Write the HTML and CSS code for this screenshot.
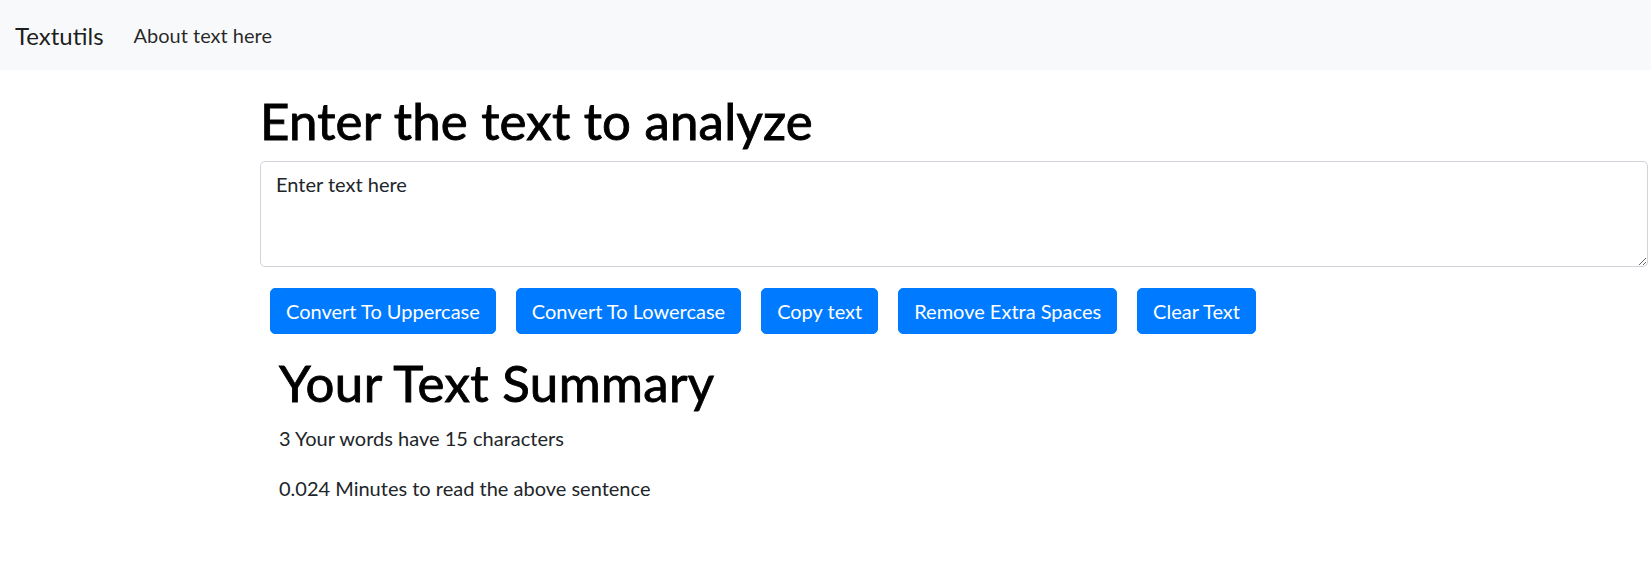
FILE: index.html
```html
<!DOCTYPE html>
<html lang="en">
<head>
<meta charset="utf-8">
<title>Textutils</title>
<link rel="stylesheet" href="styles.css">
</head>
<body>
<nav class="navbar">
  <a class="brand" href="#">Textutils</a>
  <a class="nav-link" href="#">About text here</a>
</nav>
<main class="container">
  <h1 class="title">Enter the text to analyze</h1>
  <textarea class="form-control" rows="3">Enter text here</textarea>
  <div class="btn-row">
    <button class="btn">Convert To Uppercase</button>
    <button class="btn">Convert To Lowercase</button>
    <button class="btn">Copy text</button>
    <button class="btn">Remove Extra Spaces</button>
    <button class="btn">Clear Text</button>
  </div>
  <section class="summary">
    <h1 class="summary-title">Your Text Summary</h1>
    <p class="summary-line">3 Your words have 15 characters</p>
    <p class="summary-line">0.024 Minutes to read the above sentence</p>
  </section>
</main>
</body>
</html>
```
FILE: styles.css
```css
* { box-sizing: border-box; }
html, body { margin: 0; padding: 0; }
body {
  font-family: Lato, "Open Sans", sans-serif;
  font-size: 20px;
  line-height: 30px;
  color: #212529;
  background: #fff;
}
.navbar {
  display: flex;
  align-items: center;
  height: 70px;
  padding: 0 15px;
  background: #f8f9fa;
}
.brand {
  font-size: 24px;
  line-height: 37px;
  color: rgba(0,0,0,.9);
  text-decoration: none;
  margin-right: 20px;
}
.nav-link {
  font-size: 20px;
  color: rgba(0,0,0,.85);
  text-decoration: none;
  padding: 0 10px;
}
.container {
  margin: 0 3px 0 260px;
}
.title, .summary-title {
  font-size: 51px;
  line-height: 60px;
  font-weight: 400;
  -webkit-text-stroke: 0.9px #000;
  margin: 21px 0 10px;
  color: #000;
  letter-spacing: 0.2px;
}
.form-control {
  display: block;
  width: 100%;
  height: 106px;
  padding: 7px 15px;
  font-family: inherit;
  font-size: 20px;
  line-height: 30px;
  color: #212529;
  border: 1px solid #ced4da;
  border-radius: 5px;
  background: #fff;
}
.btn-row {
  display: flex;
  margin-top: 21px;
}
.btn {
  margin: 0 10px;
  padding: 7px 15px;
  font-family: inherit;
  font-size: 20px;
  line-height: 30px;
  color: #fff;
  background: #007bff;
  border: 1px solid #007bff;
  border-radius: 5px;
}
.summary {
  padding-left: 19px;
  margin-top: 19px;
}
.summary-title {
  margin: 0 0 10px;
  letter-spacing: 0.35px;
}
.summary-line {
  margin: 0 0 20px;
}
```
